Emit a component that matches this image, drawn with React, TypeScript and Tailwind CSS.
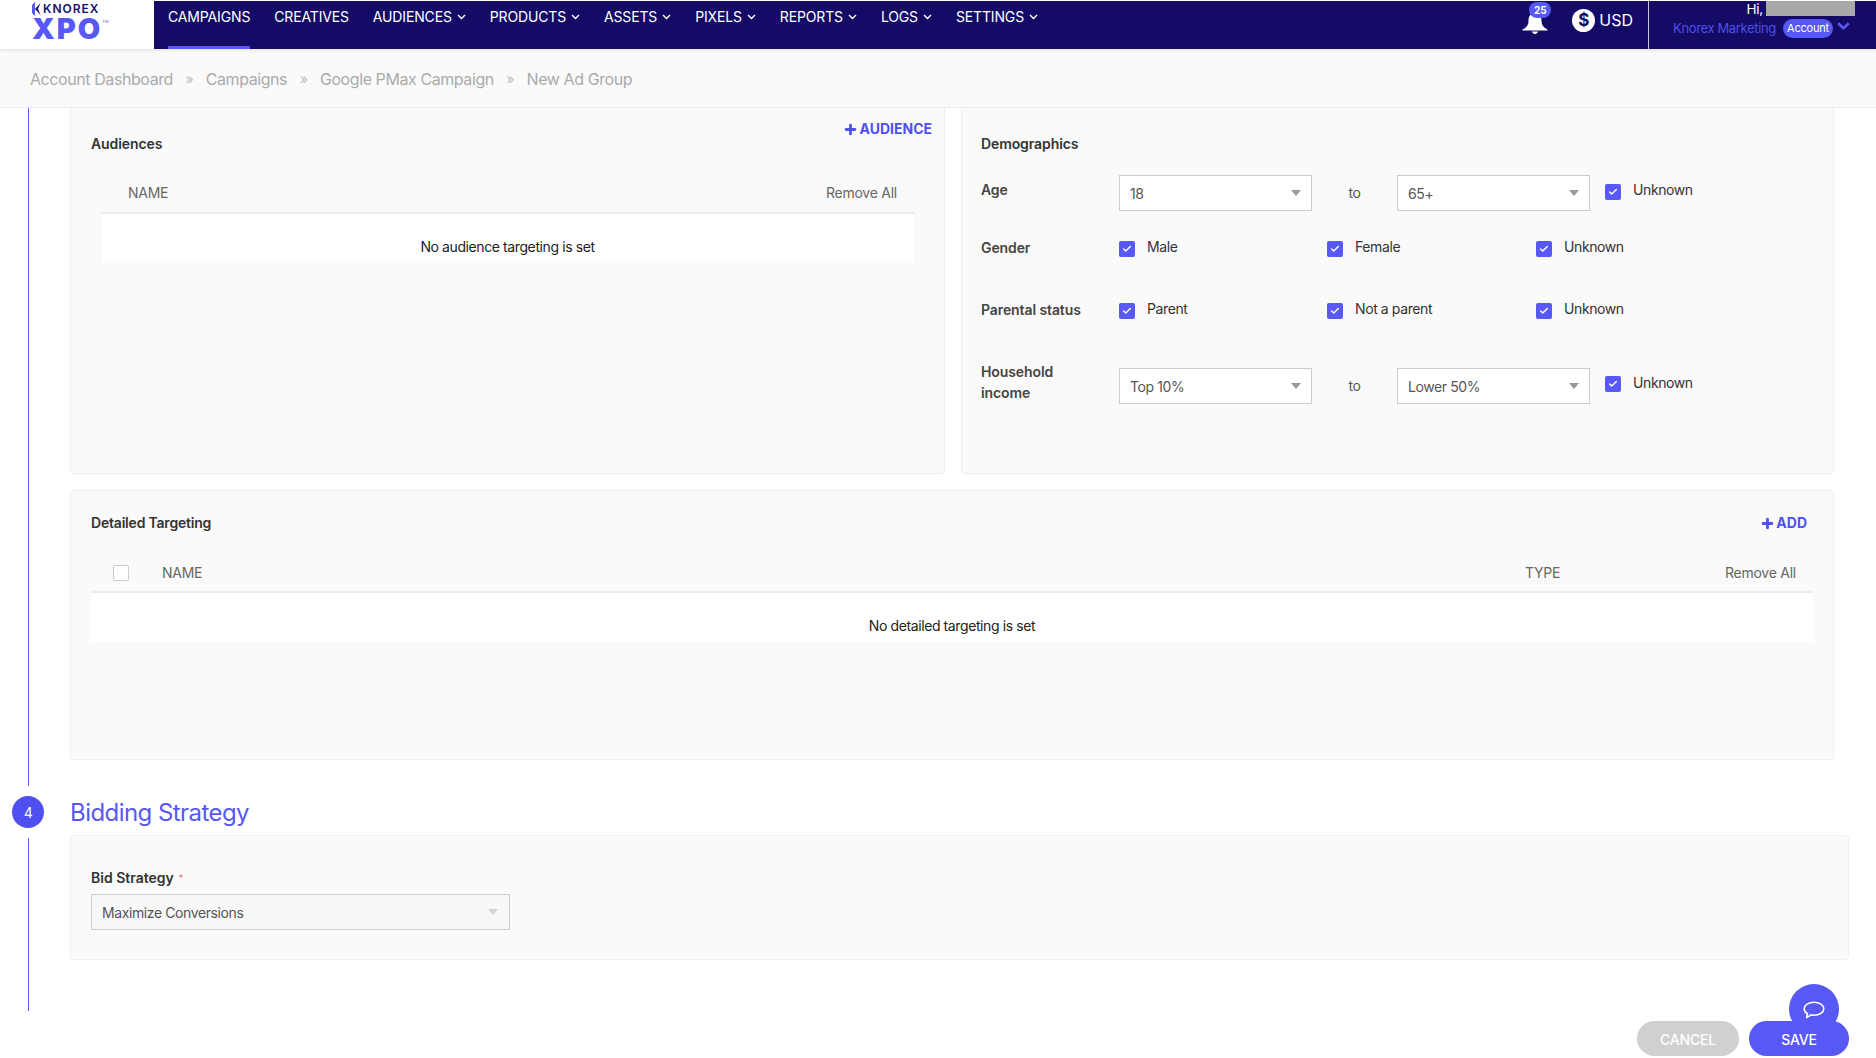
import React from "react";
import { Check, Plus } from "lucide-react";

const NAV: [string, boolean][] = [
  ["CAMPAIGNS", false],
  ["CREATIVES", false],
  ["AUDIENCES", true],
  ["PRODUCTS", true],
  ["ASSETS", true],
  ["PIXELS", true],
  ["REPORTS", true],
  ["LOGS", true],
  ["SETTINGS", true],
];

function Arrow({ light }: { light?: boolean }) {
  return (
    <svg width="10" height="6" viewBox="0 0 10 6" className="shrink-0">
      <polygon points="0,0 10,0 5,6" fill={light ? "#d4d4d4" : "#999999"} />
    </svg>
  );
}

function Select({ value }: { value: string }) {
  return (
    <div className="flex h-[36px] w-[193px] shrink-0 items-center justify-between border border-[#cccccc] bg-white pl-[10px] pr-[10px] text-[14px] text-[#555555]">
      <span>{value}</span>
      <Arrow />
    </div>
  );
}

function Box() {
  return (
    <span className="flex h-[16px] w-[16px] shrink-0 items-center justify-center rounded-[2px] bg-[#5858f5]">
      <Check size={10} strokeWidth={3.5} className="text-white" />
    </span>
  );
}

function Checked({ label, width, low }: { label: string; width?: string; low?: boolean }) {
  return (
    <div className={`flex items-start ${width ?? ""}`}>
      <Box />
      <span className={`ml-[12px] whitespace-nowrap text-[14px] leading-[18px] text-[#333333] ${low ? "-mt-[2px]" : "-mt-[3px]"}`}>{label}</span>
    </div>
  );
}

function SideLabel({ children, className }: { children: React.ReactNode; className: string }) {
  return <div className={`w-[138px] shrink-0 text-[14px] font-semibold tracking-[-0.1px] text-[#444444] ${className}`}>{children}</div>;
}

function Crumb({ children }: { children: React.ReactNode }) {
  return <span className="text-[16px] tracking-[-0.42px] text-[#aaaaaa]">{children}</span>;
}

function Sep() {
  return <span className="text-[14px] text-[#bbbbbb]">»</span>;
}

function Logo() {
  return (
    <div className="flex h-[48px] w-[154px] shrink-0 flex-col bg-white pl-[32px] tracking-normal">
      <div className="flex h-[15px] items-center">
        <svg width="9" height="14" viewBox="0 0 9 14" className="shrink-0">
          <polygon points="0,3 3,0 3,14 0,11" fill="#5858f5" />
          <polygon points="3,7 8.500,1 6,7 8.500,13" fill="#14106a" />
        </svg>
        <span className="ml-[2px] text-[12px] font-semibold leading-none tracking-[1px] text-[#14106a]">KNOREX</span>
      </div>
      <div className="flex items-start">
        <span className="text-[29px] font-black leading-[26px] tracking-[2px] text-[#5858f5]">XPO</span>
        <span className="mt-[4px] text-[4px] leading-none text-[#5858f5]">TM</span>
      </div>
    </div>
  );
}

function NavChevron() {
  return (
    <svg width="9" height="6" viewBox="0 0 9 6" fill="none" stroke="#ffffff" strokeWidth="1.400" className="ml-[5px] mt-[6px] shrink-0">
      <path d="M1 1l3.500 3.500L8 1" />
    </svg>
  );
}

function Header() {
  return (
    <div className="relative z-10 shrink-0 bg-white pt-[1px] shadow-[0_1px_4px_rgba(0,0,0,0.12)]">
      <div className="flex h-[48px]">
        <Logo />
        <div className="flex flex-1 bg-[#130b65] pl-[14px] text-white">
          <nav className="flex gap-[24px] tracking-[-0.15px]">
            {NAV.map(([name, chev], i) => (
              <div
                key={name}
                className={`flex h-[48px] items-start border-b-[3px] pt-[7px] text-[14px] leading-[18px] ${i === 0 ? "border-[#5858f5]" : "border-transparent"}`}
              >
                <span>{name}</span>
                {chev && <NavChevron />}
              </div>
            ))}
          </nav>
          <div className="ml-auto flex tracking-normal">
            <div className="relative mr-[24px] mt-[11px] h-[24px] w-[26px]">
              <svg width="26" height="22" viewBox="0 0 26 22">
                <path
                  d="M13 1C8 1 6.500 5 6.500 9c0 4-2 6.500-6 8.500V18.500h25v-1C21.500 15.500 19.500 13 19.500 9 19.500 5 18 1 13 1zM10 19.500c.4 1.500 1.600 2.500 3 2.500s2.600-1 3-2.500z"
                  fill="#ffffff"
                />
              </svg>
              <span className="absolute -top-[10px] left-[7px] flex h-[16px] w-[22px] items-center justify-center rounded-full bg-[#5858f5] text-[10px] font-bold text-white">
                25
              </span>
            </div>
            <div className="mt-[8px] flex h-[23px] w-[23px] items-center justify-center rounded-full bg-white text-[17px] font-bold leading-none text-[#130b65]">
              $
            </div>
            <span className="ml-[4px] mt-[7px] text-[16px] leading-[24px]">USD</span>
            <div className="ml-[15px] flex w-[228px] flex-col border-l border-[#c8c8d8]">
              <div className="flex h-[16px] justify-end pr-[21px]">
                <span className="mr-[3px] text-[13.500px] leading-[16px] tracking-[-0.2px]">Hi,</span>
                <span className="h-[15px] w-[89px] bg-[#a9a9ab]" />
              </div>
              <div className="mt-[2px] flex items-start pl-[24px]">
                <span className="w-[110px] shrink-0 whitespace-nowrap text-[13px] leading-[18px] tracking-[-0.35px] text-[#4f4fe8]">
                  Knorex Marketing
                </span>
                <span className="flex h-[19px] w-[50px] items-center justify-center rounded-full bg-[#5858f5] text-[11px] tracking-[-0.2px] text-white">
                  Account
                </span>
                <svg width="13" height="8" viewBox="0 0 13 8" fill="none" stroke="#5858f5" strokeWidth="2.600" className="ml-[4px] mt-[3px]">
                  <path d="M1.200 1.200l5.300 5 5.300-5" />
                </svg>
              </div>
            </div>
          </div>
        </div>
      </div>
    </div>
  );
}

function Breadcrumb() {
  return (
    <div className="flex h-[59px] shrink-0 items-center gap-[12.500px] border-b border-[#ececf0] bg-[#fafafa] pl-[30px] pt-[1px]">
      <Crumb>Account Dashboard</Crumb>
      <Sep />
      <Crumb>Campaigns</Crumb>
      <Sep />
      <Crumb>Google PMax Campaign</Crumb>
      <Sep />
      <Crumb>New Ad Group</Crumb>
    </div>
  );
}

function AddLink({ label, className }: { label: string; className: string }) {
  return (
    <span className={`flex items-center text-[14px] font-bold leading-[18px] tracking-[0px] text-[#5050f0] ${className}`}>
      <Plus size={15} strokeWidth={4.5} className="mr-[1px]" />
      {label}
    </span>
  );
}

function AudiencesCard() {
  return (
    <div className="h-[366px] w-[875px] shrink-0 rounded-b-[4px] border border-t-0 border-[#eeeeee] bg-[#fafafa]">
      <div className="flex justify-between pl-[20px] pr-[12px]">
        <span className="mt-[27px] text-[14px] font-semibold leading-[18px] tracking-[-0.1px] text-[#333333]">Audiences</span>
        <AddLink label="AUDIENCE" className="mt-[12px] h-[18px]" />
      </div>
      <div className="mx-[30px] mt-[21px]">
        <div className="flex h-[40px] items-center justify-between border-b-2 border-[#e9ecef] pb-[1px] pl-[27px] pr-[17px] text-[14px] tracking-[-0.25px] text-[#666666]">
          <span>NAME</span>
          <span>Remove All</span>
        </div>
        <div className="h-[49px] bg-white pt-[24px] text-center text-[14px] leading-[18px] text-[#222222]">
          No audience targeting is set
        </div>
      </div>
    </div>
  );
}

function DemographicsCard() {
  return (
    <div className="h-[366px] w-[873px] shrink-0 rounded-b-[4px] border border-t-0 border-[#eeeeee] bg-[#fafafa] pl-[19px]">
      <div className="mt-[27px] text-[14px] font-semibold leading-[18px] tracking-[-0.1px] text-[#333333]">Demographics</div>

      <div className="mt-[22px] flex items-start">
        <SideLabel className="mt-[6px] leading-[18px]">Age</SideLabel>
        <Select value="18" />
        <div className="w-[85px] text-center text-[14px] leading-[35px] text-[#555555]">to</div>
        <Select value="65+" />
        <div className="ml-[15px] mt-[9px]">
          <Checked label="Unknown" />
        </div>
      </div>

      <div className="mt-[30px] flex items-start">
        <SideLabel className="-mt-[2px] leading-[18px]">Gender</SideLabel>
        <Checked label="Male" width="w-[208px]" />
        <Checked label="Female" width="w-[209px]" />
        <Checked label="Unknown" />
      </div>

      <div className="mt-[46px] flex items-start">
        <SideLabel className="-mt-[2px] leading-[18px]">Parental status</SideLabel>
        <Checked label="Parent" width="w-[208px]" />
        <Checked label="Not a parent" width="w-[209px]" />
        <Checked label="Unknown" />
      </div>

      <div className="mt-[49px] flex items-start">
        <SideLabel className="-mt-[7px] leading-[21px]">
          Household
          <br />
          income
        </SideLabel>
        <Select value="Top 10%" />
        <div className="w-[85px] text-center text-[14px] leading-[35px] text-[#555555]">to</div>
        <Select value="Lower 50%" />
        <div className="ml-[15px] mt-[8px]">
          <Checked label="Unknown" low />
        </div>
      </div>
    </div>
  );
}

function DetailedCard() {
  return (
    <div className="mt-[16px] h-[270px] w-[1764px] rounded-[4px] border border-[#eeeeee] bg-[#fafafa]">
      <div className="mt-[23px] flex justify-between pl-[20px] pr-[26px]">
        <span className="text-[14px] font-semibold leading-[18px] tracking-[-0.2px] text-[#333333]">Detailed Targeting</span>
        <AddLink label="ADD" className="h-[18px]" />
      </div>
      <div className="mx-[20px] mt-[23px]">
        <div className="flex h-[38px] items-center border-b-2 border-[#e9ecef] pb-[2px] pl-[22px] pr-[17px] text-[14px] tracking-[-0.25px] text-[#666666]">
          <span className="mt-[2px] h-[16px] w-[16px] shrink-0 rounded-[2px] border border-[#cccccc] bg-white" />
          <span className="ml-[33px] flex-1">NAME</span>
          <span className="w-[200px]">TYPE</span>
          <span className="w-[71px] whitespace-nowrap text-right">Remove All</span>
        </div>
        <div className="h-[49px] bg-white pt-[24px] text-center text-[14px] leading-[18px] text-[#222222]">
          No detailed targeting is set
        </div>
      </div>
    </div>
  );
}

function BiddingCard() {
  return (
    <div className="mt-[6px] h-[125px] w-[1779px] rounded-[4px] border border-[#eeeeee] bg-[#fafafa] pl-[20px] pt-[33px]">
      <div className="text-[14px] font-semibold leading-[18px] tracking-[0px] text-[#333333]">
        Bid Strategy<span className="ml-[5px] align-top text-[9px] font-normal text-[#e05a5a]">*</span>
      </div>
      <div className="mt-[7px] flex h-[36px] w-[419px] items-center justify-between border border-[#cccccc] bg-[#f8f8f8] pl-[10px] pr-[11px] text-[14px] text-[#555555]">
        <span>Maximize Conversions</span>
        <Arrow light />
      </div>
    </div>
  );
}

function Rail() {
  return (
    <div className="flex w-[56px] shrink-0 flex-col items-center">
      <div className="h-[678px] w-px bg-[#5858f5]" />
      <div className="mt-[10px] flex h-[32px] w-[32px] items-center justify-center rounded-full bg-[#5050f0] text-[14px] text-white">
        4
      </div>
      <div className="mt-[10px] h-[173px] w-px bg-[#5858f5]" />
    </div>
  );
}

export default function App() {
  return (
    <div className="relative flex h-[1058px] w-[1876px] flex-col overflow-hidden bg-white font-['Inter','Liberation_Sans',sans-serif] tracking-[-0.4px]">
      <Header />
      <Breadcrumb />
      <main className="flex flex-1">
        <Rail />
        <div className="ml-[14px] flex w-[1779px] flex-col">
          <div className="flex gap-[16px]">
            <AudiencesCard />
            <DemographicsCard />
          </div>
          <DetailedCard />
          <h2 className="mt-[37px] text-[24px] font-normal leading-[32px] tracking-[-0.56px] text-[#5858f5]">Bidding Strategy</h2>
          <BiddingCard />
          <div className="relative z-10 mt-[61px] flex justify-end gap-[10px] text-[14px] font-medium tracking-[-0.15px] text-white">
            <button className="h-[35px] w-[102px] rounded-full bg-[#d0d0d0] pt-[2px]">CANCEL</button>
            <button className="h-[35px] w-[100px] rounded-full bg-[#5858f5] pt-[2px]">SAVE</button>
          </div>
        </div>
      </main>
      <div className="absolute left-[1789px] top-[984px] flex h-[50px] w-[50px] items-start justify-center rounded-full bg-[#5858f5] pt-[17px]">
        <svg width="22" height="18" viewBox="0 0 22 18" fill="none" stroke="#ffffff" strokeWidth="1.600" strokeLinejoin="round">
          <path d="M11 1.200c5.400 0 9.800 2.900 9.800 6.500s-4.400 6.500-9.800 6.500c-1 0-2-.1-2.900-.3L3.600 16.600l.9-3.800C2.400 11.600 1.200 9.800 1.200 7.700 1.200 4.100 5.600 1.200 11 1.200z" />
        </svg>
      </div>
    </div>
  );
}
